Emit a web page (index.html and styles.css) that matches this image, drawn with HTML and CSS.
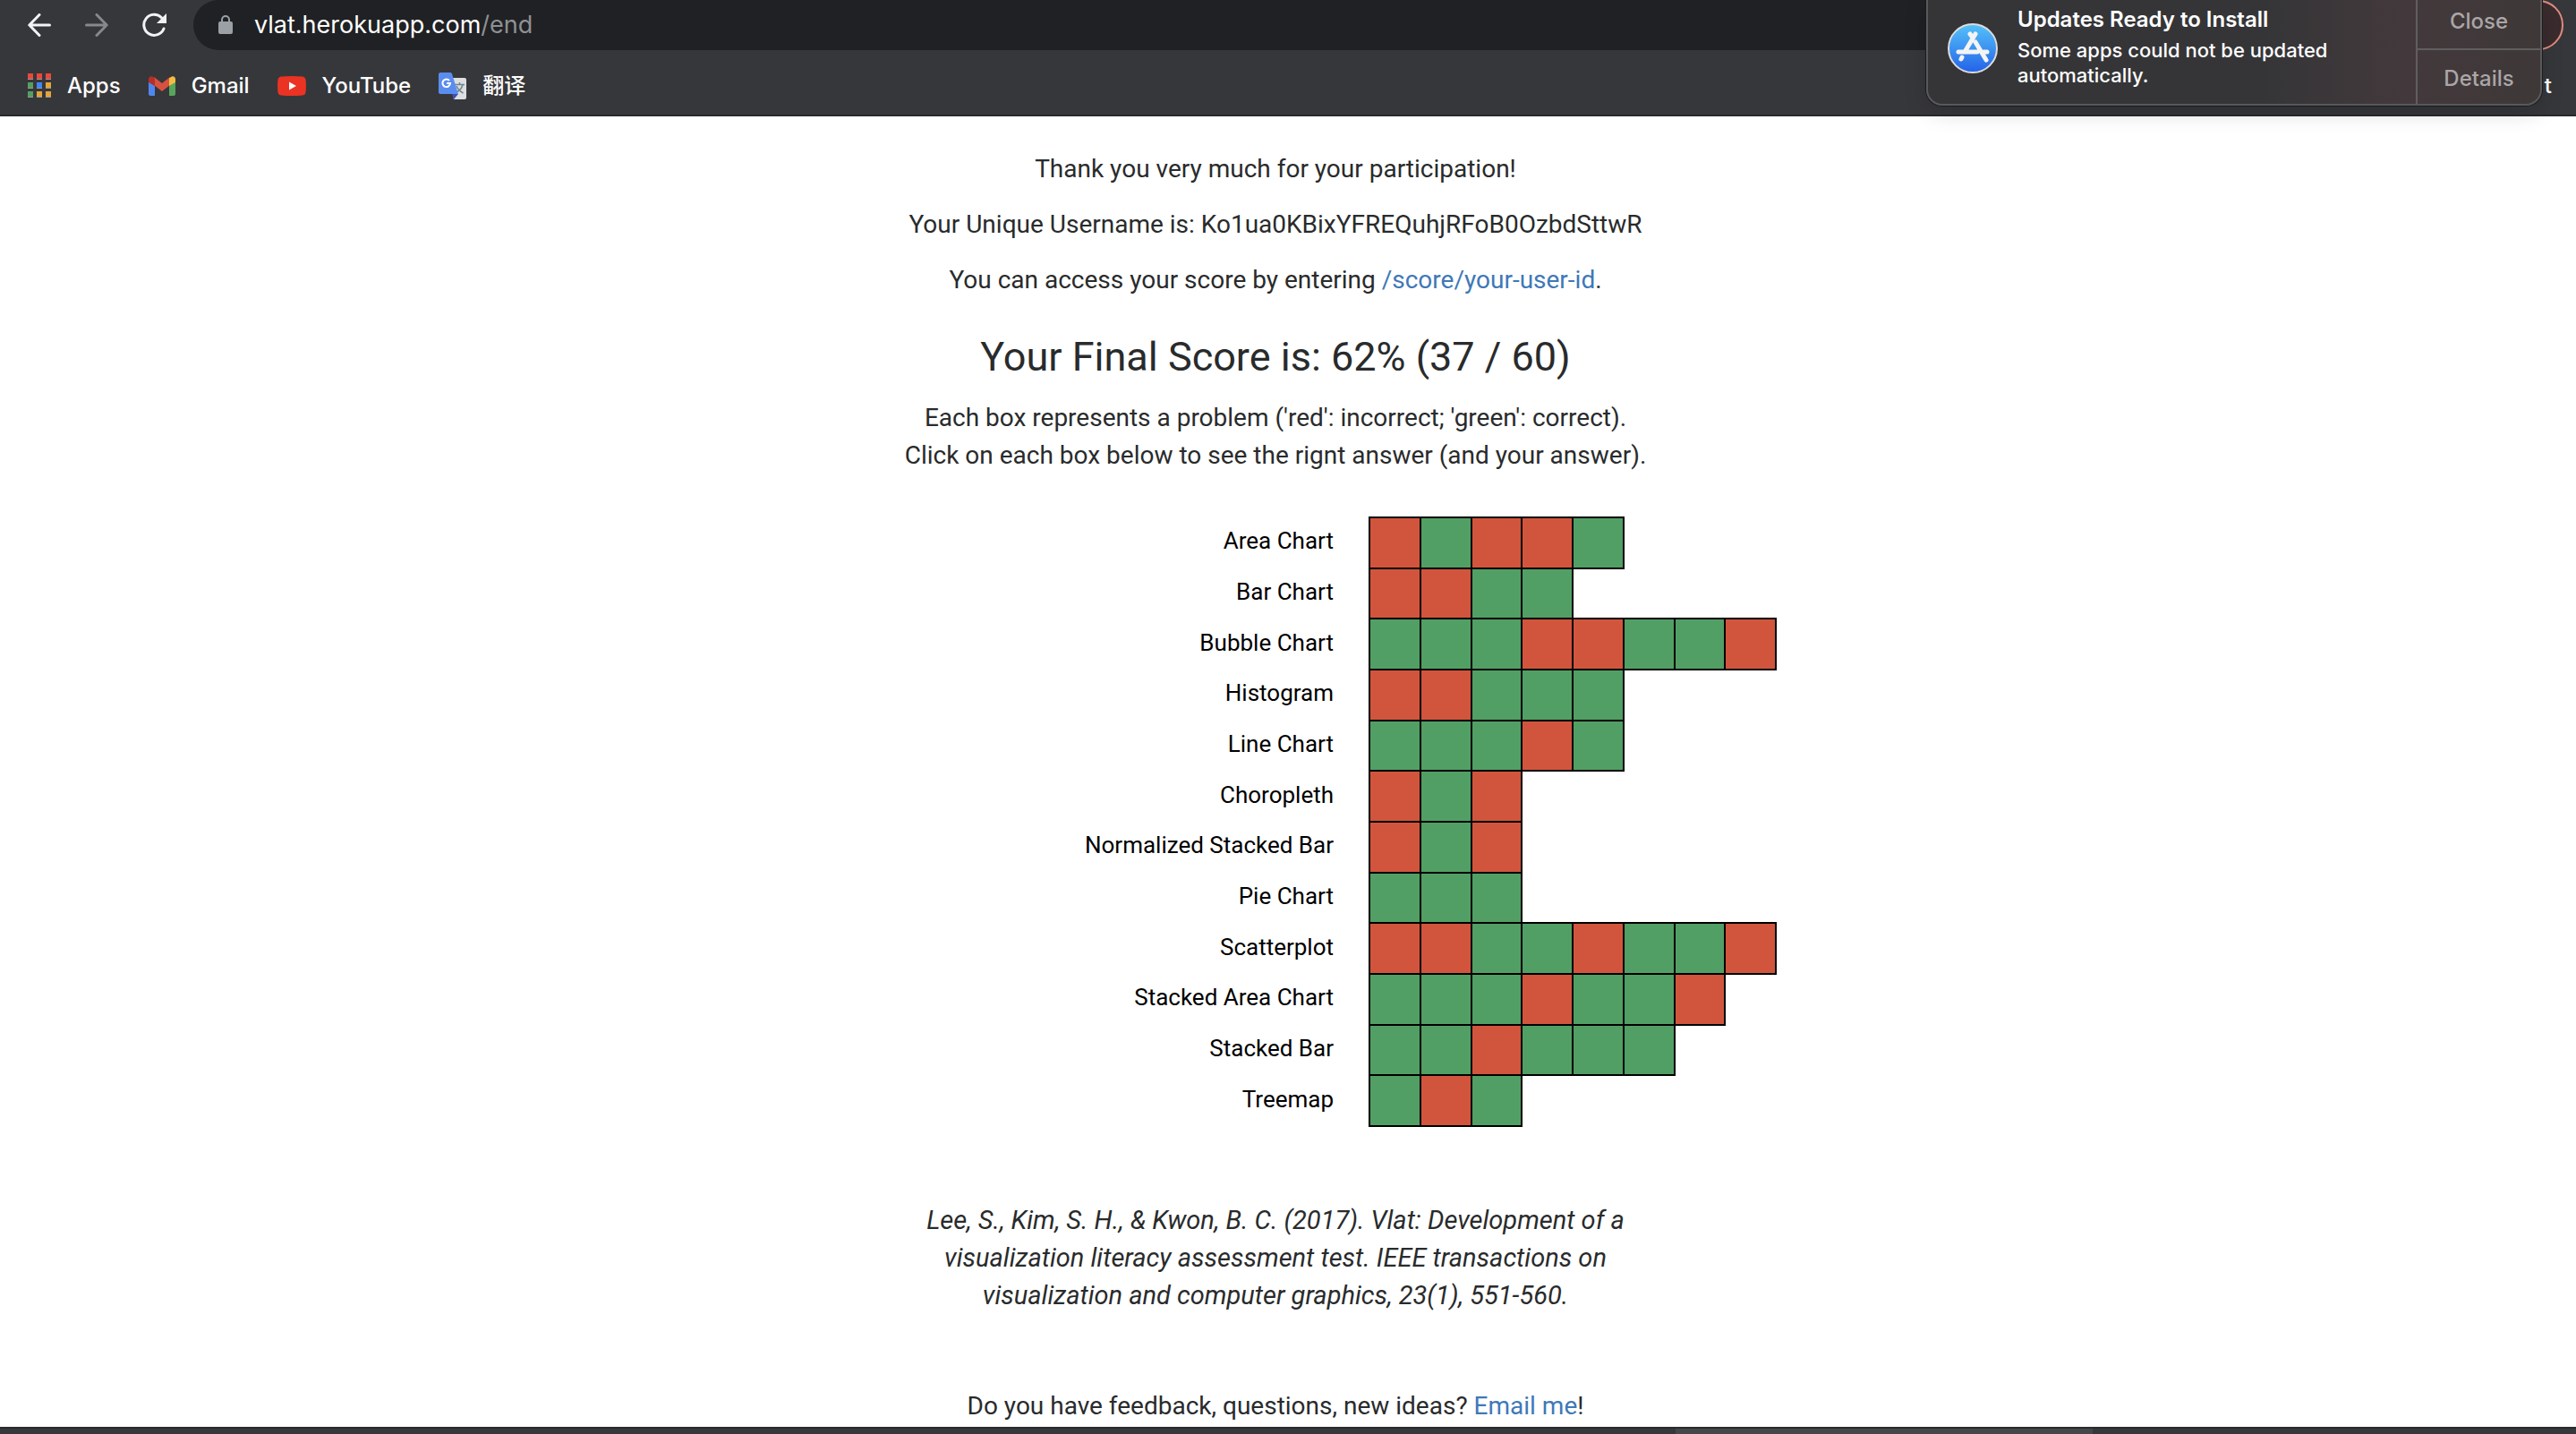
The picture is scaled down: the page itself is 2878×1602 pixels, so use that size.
FILE: index.html
```html
<!DOCTYPE html>
<html lang="en">
<head>
<meta charset="utf-8">
<title>VLAT</title>
<link rel="stylesheet" href="styles.css">
</head>
<body>
<header class="browser">
  <div class="toolbar">
    <button class="tool" aria-label="Back"><svg width="26" height="26" viewBox="0 0 26 26" fill="none" stroke="#f1f3f4" stroke-width="3" stroke-linecap="round" stroke-linejoin="round"><path d="M24.500 13H2M13 1.500 1.800 13 13 24.500"/></svg></button>
    <button class="tool" aria-label="Forward"><svg width="26" height="26" viewBox="0 0 26 26" fill="none" stroke="#87888b" stroke-width="3" stroke-linecap="round" stroke-linejoin="round"><path d="M1.500 13H24M13 1.500 24.200 13 13 24.500"/></svg></button>
    <button class="tool tool-reload" aria-label="Reload"><svg width="28" height="28" viewBox="0 0 28 28"><path d="M24 18A11.500 11.500 0 1 1 21.500 5.800" fill="none" stroke="#f1f3f4" stroke-width="3" stroke-linecap="round"/><path d="M27 1v11H16z" fill="#f1f3f4"/></svg></button>
    <div class="omnibox">
      <svg class="lock" width="16" height="22" viewBox="0 0 16 22"><rect y="7" width="16" height="14" rx="2" fill="#9aa0a6"/><path d="M4 8V5a4 4 0 0 1 8 0v3" fill="none" stroke="#9aa0a6" stroke-width="2"/></svg>
      <span class="url">vlat.herokuapp.com<span class="url-path">/end</span></span>
    </div>
  </div>
  <nav class="bookmarks">
    <a class="bookmark" href="#"><svg width="26" height="28" viewBox="0 0 26 28"><path fill="#97989a" d="M0 5h6v2H0zM10 5h6v2h-6zM20 5h6v2h-6zM0 15h6v2H0zM10 15h6v2h-6zM20 15h6v2h-6zM0 25h6v2H0zM10 25h6v2h-6zM20 25h6v2h-6z"/><path fill="#e8493a" d="M0 0h6v6H0zM10 0h6v6h-6zM20 0h6v6h-6z"/><path fill="#549f5f" d="M0 10h6v6H0zM0 20h6v6H0z"/><path fill="#4285f4" d="M10 10h6v6h-6z"/><path fill="#e5a43a" d="M20 10h6v6h-6zM10 20h6v6h-6zM20 20h6v6h-6z"/></svg><span>Apps</span></a>
    <a class="bookmark" href="#"><svg width="30" height="22" viewBox="0 0 30 22"><path fill="#4f87ee" d="M0 6l7 5v11H2a2 2 0 0 1-2-2z"/><path fill="#58a55c" d="M30 6l-7 5v11h5a2 2 0 0 0 2-2z"/><path fill="#d85140" d="M6 1l9 7 9-7v9l-9 7-9-7z"/><path fill="#b3302a" d="M0 7V3a3 3 0 0 1 5-2l2 1.500V11z"/><path fill="#f1bd42" d="M30 7V3a3 3 0 0 0-5-2l-2 1.500V11z"/></svg><span>Gmail</span></a>
    <a class="bookmark" href="#"><svg width="32" height="22" viewBox="0 0 32 22"><path fill="#eb3323" d="M4 .5Q16-.5 28 .5q3 .5 3.500 3.500.8 7 0 14-.5 3-3.500 3.500-12 1-24 0Q1 21 .5 18q-.8-7 0-14Q1 1 4 .5z"/><path fill="#fff" d="M13 6.500v9l8-4.500z"/></svg><span>YouTube</span></a>
    <a class="bookmark" href="#"><svg width="31" height="30" viewBox="0 0 31 30"><path fill="#dddee0" d="M13 6h16a2 2 0 0 1 2 2v20a2 2 0 0 1-2 2H17z"/><path fill="#3a50b5" d="M15 24h7l-5 6z"/><path fill="none" stroke="#6f8790" stroke-width="1.500" d="M18 13.500h11M23.500 11v2.500M27 13.500q-1.500 6-7 8.500M20 15q2 5 7.500 8"/><path fill="#5b8def" d="M2 0h11a2 2 0 0 1 2 1.500L22 24H2a2 2 0 0 1-2-2V2a2 2 0 0 1 2-2z"/><path d="M12 9A4.300 4.300 0 1 0 13 12H9" fill="none" stroke="#fff" stroke-width="2"/></svg><span>翻译</span></a>
    <a class="bookmark bookmark-last" href="#">t</a>
  </nav>
  <div class="profile"></div>
  <aside class="notice">
    <svg class="notice-icon" width="58" height="58" viewBox="0 0 58 58"><defs><linearGradient id="store" x2="0" y2="1"><stop offset="0" stop-color="#55c2f9"/><stop offset="1" stop-color="#2462e9"/></linearGradient></defs><circle cx="29" cy="29" r="27" fill="url(#store)" stroke="#dcdcda" stroke-width="2"/><g stroke="#f4f4f4" stroke-width="5" stroke-linecap="round" fill="none"><path d="M32 13 20 33M26 13l3 4M32 22l12 20M13 33h21M41 33h4M17 39l-1 2"/></g></svg>
    <div class="notice-text"><strong class="notice-title">Updates Ready to Install</strong><span>Some apps could not be updated<br>automatically.</span></div>
    <div class="notice-actions"><button class="notice-button">Close</button><button class="notice-button">Details</button></div>
  </aside>
</header>
<main class="page">
  <p class="line">Thank you very much for your participation!</p>
  <p class="line">Your Unique Username is: Ko1ua0KBixYFREQuhjRFoB0OzbdSttwR</p>
  <p class="line">You can access your score by entering <a class="link" href="#">/score/your-user-id</a>.</p>
  <h1 class="score">Your Final Score is: 62% (37 / 60)</h1>
  <p class="line">Each box represents a problem ('red': incorrect; 'green': correct).<br>Click on each box below to see the rignt answer (and your answer).</p>
  <div class="chart" id="chart"></div>
  <p class="line citation">Lee, S., Kim, S. H., &amp; Kwon, B. C. (2017). Vlat: Development of a<br>visualization literacy assessment test. IEEE transactions on<br>visualization and computer graphics, 23(1), 551-560.</p>
  <p class="line feedback">Do you have feedback, questions, new ideas? <a class="link" href="#">Email me</a>!</p>
</main>
<footer class="dock"><div class="dock-item"></div></footer>
<script src="chart.js"></script>
</body>
</html>
```
FILE: styles.css
```css
* { box-sizing: border-box; }
body { margin: 0; min-height: 100vh; display: flex; flex-direction: column; background: #fff; color: #292b2c; font-family: "Roboto", sans-serif; font-size: 28px; line-height: 42px; }
button { margin: 0; padding: 0; border: 0; background: none; font: inherit; color: inherit; }
a { text-decoration: none; color: inherit; }
svg { display: block; flex: none; }

.browser { position: relative; height: 130px; background: #36373b; border-bottom: 2px solid #28292b; color: #fff; font-family: "Inter", "Noto Sans CJK SC", sans-serif; }
.toolbar { display: flex; align-items: center; height: 56px; padding: 0 16px 0 31px; }
.tool { margin-right: 38px; }
.tool-reload { margin-right: 29px; }
.omnibox { flex: 1; display: flex; align-items: center; gap: 24px; height: 56px; padding-left: 28px; border-radius: 28px; background: #202124; font-size: 27px; }
.url-path { color: #8f9093; }
.bookmarks { display: flex; align-items: center; height: 72px; padding: 8px 27px 0 31px; font-size: 24px; font-weight: 500; line-height: 32px; }
.bookmark { display: flex; align-items: center; gap: 18px; margin-right: 31px; }
.bookmark-last { margin: 0 0 0 auto; }
.profile { position: absolute; top: 0; right: 14px; width: 60px; height: 56px; border: 2px solid #e08b80; border-radius: 28px; background: #3a2b2d; }

.notice { position: absolute; top: 0; right: 38px; width: 688px; height: 118px; display: flex; border: 2px solid #59595b; border-top: 0; border-radius: 0 0 18px 18px; background: linear-gradient(90deg, #353537 55%, #43393c 78%, #3e3838); box-shadow: 0 0 0 1px #1c1c1e, 0 8px 24px rgba(0, 0, 0, 0.15); font-size: 22px; font-weight: 500; line-height: 28px; }
.notice-icon { align-self: flex-start; margin: 25px 21px 0 21px; }
.notice-text { flex: 1; display: flex; flex-direction: column; gap: 6px; padding-top: 8px; }
.notice-title { font-size: 24px; font-weight: 600; }
.notice-actions { width: 139px; display: grid; grid-template-rows: 56px 1fr; border-left: 2px solid #615d5f; color: #aaa6a7; font-size: 24px; }
.notice-button:first-child { border-bottom: 2px solid #615d5f; padding-bottom: 6px; }
.notice-button:last-child { padding-top: 4px; }

.page { flex: 1; padding: 38px 28px 0 0; text-align: center; }
.line { margin: 0 0 20px; }
.link { color: #4078b8; }
.score { margin: 40px 0 22px; font-size: 45px; font-weight: 400; line-height: 50px; }
.chart { display: grid; grid-template-rows: repeat(12, 1fr); width: 1118px; height: 680px; margin: 48px auto 84px; color: #000; font-size: 26px; }
.row { display: grid; grid-template-columns: 1fr 454px; column-gap: 40px; align-items: center; }
.label { padding-bottom: 4px; text-align: right; line-height: 50px; }
.cells { display: grid; grid-template-columns: repeat(8, 1fr); align-self: stretch; }
.cell { box-shadow: 0 0 0 1px #000, inset 0 0 0 1px #000; }
.right { background: #529f65; }
.wrong { background: #d1553d; }
.citation { margin-bottom: 82px; font-size: 29px; font-style: italic; }
.feedback { margin-bottom: 0; }

.dock { height: 8px; padding-right: 540px; display: flex; justify-content: flex-end; background: #36373b; border-top: 2px solid #2a2b2a; }
.dock-item { width: 466px; background: #454649; }
```
FILE: chart.js
```js
// One letter per problem: r = incorrect, g = correct.
const results = [
  ["Area Chart", "rgrrg"],
  ["Bar Chart", "rrgg"],
  ["Bubble Chart", "gggrrggr"],
  ["Histogram", "rrggg"],
  ["Line Chart", "gggrg"],
  ["Choropleth", "rgr"],
  ["Normalized Stacked Bar", "rgr"],
  ["Pie Chart", "ggg"],
  ["Scatterplot", "rrggrggr"],
  ["Stacked Area Chart", "gggrggr"],
  ["Stacked Bar", "ggrggg"],
  ["Treemap", "grg"]
];
const chart = document.getElementById("chart");
for (const [name, answers] of results) {
  const cells = [...answers].map((a, i) =>
    `<button class="cell ${a === "g" ? "right" : "wrong"}" aria-label="${name}, problem ${i + 1}"></button>`).join("");
  chart.insertAdjacentHTML("beforeend",
    `<div class="row"><span class="label">${name}</span><div class="cells">${cells}</div></div>`);
}
```
